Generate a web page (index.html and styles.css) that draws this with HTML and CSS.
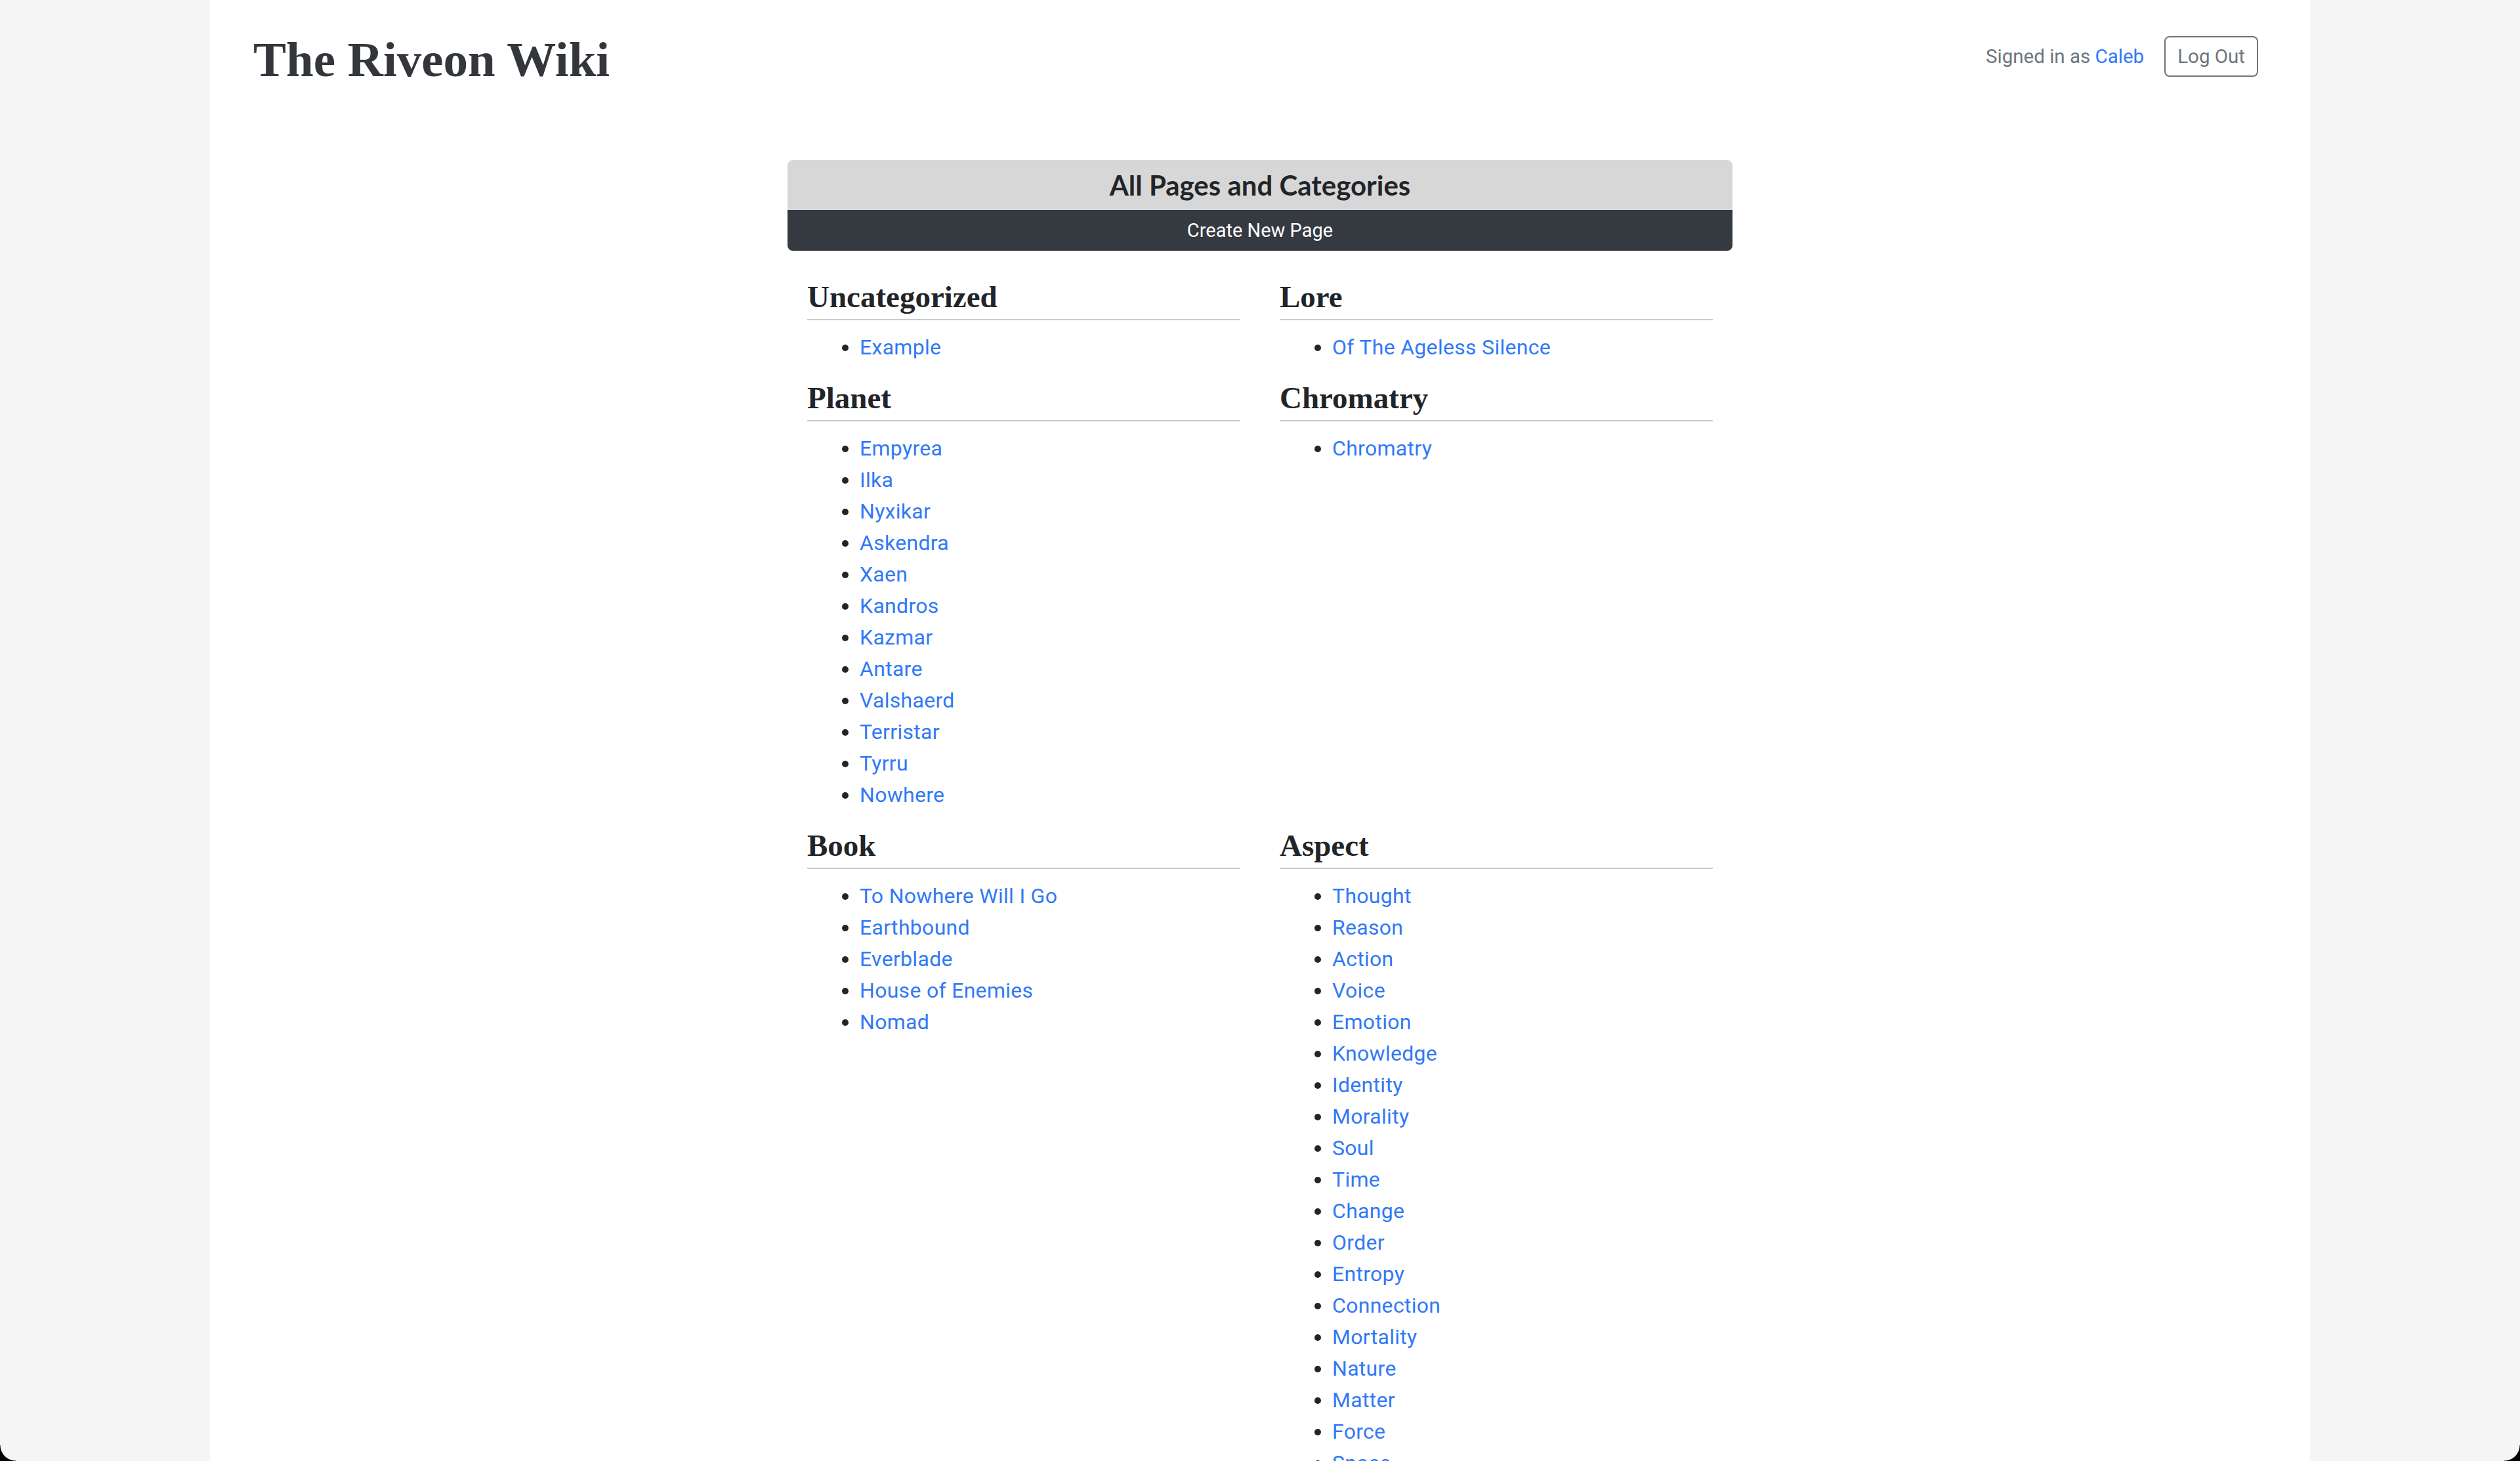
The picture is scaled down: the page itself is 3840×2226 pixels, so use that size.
FILE: index.html
```html
<!DOCTYPE html>
<html lang="en">
<head>
<meta charset="utf-8">
<title>The Riveon Wiki</title>
<link rel="stylesheet" href="styles.css">
</head>
<body>
<div class="page">
  <header class="topbar">
    <h1 class="brand">The Riveon Wiki</h1>
    <div class="account">
      <span class="signed">Signed in as <a href="#" class="link">Caleb</a></span>
      <button class="btn-logout">Log Out</button>
    </div>
  </header>

  <section class="card">
    <div class="card-head">All Pages and Categories</div>
    <a href="#" class="card-btn">Create New Page</a>
  </section>

  <div class="cats">
    <div class="cat">
      <h4 class="cat-title">Uncategorized</h4>
      <ul class="cat-list">
        <li><a href="#" class="link">Example</a></li>
      </ul>
    </div>
    <div class="cat">
      <h4 class="cat-title">Lore</h4>
      <ul class="cat-list">
        <li><a href="#" class="link">Of The Ageless Silence</a></li>
      </ul>
    </div>
    <div class="cat">
      <h4 class="cat-title">Planet</h4>
      <ul class="cat-list">
        <li><a href="#" class="link">Empyrea</a></li>
        <li><a href="#" class="link">Ilka</a></li>
        <li><a href="#" class="link">Nyxikar</a></li>
        <li><a href="#" class="link">Askendra</a></li>
        <li><a href="#" class="link">Xaen</a></li>
        <li><a href="#" class="link">Kandros</a></li>
        <li><a href="#" class="link">Kazmar</a></li>
        <li><a href="#" class="link">Antare</a></li>
        <li><a href="#" class="link">Valshaerd</a></li>
        <li><a href="#" class="link">Terristar</a></li>
        <li><a href="#" class="link">Tyrru</a></li>
        <li><a href="#" class="link">Nowhere</a></li>
      </ul>
    </div>
    <div class="cat">
      <h4 class="cat-title">Chromatry</h4>
      <ul class="cat-list">
        <li><a href="#" class="link">Chromatry</a></li>
      </ul>
    </div>
    <div class="cat">
      <h4 class="cat-title">Book</h4>
      <ul class="cat-list">
        <li><a href="#" class="link">To Nowhere Will I Go</a></li>
        <li><a href="#" class="link">Earthbound</a></li>
        <li><a href="#" class="link">Everblade</a></li>
        <li><a href="#" class="link">House of Enemies</a></li>
        <li><a href="#" class="link">Nomad</a></li>
      </ul>
    </div>
    <div class="cat">
      <h4 class="cat-title">Aspect</h4>
      <ul class="cat-list">
        <li><a href="#" class="link">Thought</a></li>
        <li><a href="#" class="link">Reason</a></li>
        <li><a href="#" class="link">Action</a></li>
        <li><a href="#" class="link">Voice</a></li>
        <li><a href="#" class="link">Emotion</a></li>
        <li><a href="#" class="link">Knowledge</a></li>
        <li><a href="#" class="link">Identity</a></li>
        <li><a href="#" class="link">Morality</a></li>
        <li><a href="#" class="link">Soul</a></li>
        <li><a href="#" class="link">Time</a></li>
        <li><a href="#" class="link">Change</a></li>
        <li><a href="#" class="link">Order</a></li>
        <li><a href="#" class="link">Entropy</a></li>
        <li><a href="#" class="link">Connection</a></li>
        <li><a href="#" class="link">Mortality</a></li>
        <li><a href="#" class="link">Nature</a></li>
        <li><a href="#" class="link">Matter</a></li>
        <li><a href="#" class="link">Force</a></li>
        <li><a href="#" class="link">Space</a></li>
      </ul>
    </div>
  </div>
</div>
<div class="win-corner win-corner-left"></div>
<div class="win-corner win-corner-right"></div>
</body>
</html>
```

FILE: styles.css
```css
html, body {
  margin: 0;
  padding: 0;
}

body {
  background: #f5f5f5;
  font-family: Roboto, "Liberation Sans", sans-serif;
  font-size: 32px;
  line-height: 48px;
  color: #212529;
}

.page {
  width: 3200px;
  min-height: 100vh;
  margin: 0 auto;
  background: #ffffff;
  box-sizing: border-box;
  padding-bottom: 40px;
}

.link {
  color: #3179f5;
  text-decoration: none;
}

/* header */
.topbar {
  height: 172px;
  display: flex;
  align-items: center;
  justify-content: space-between;
  padding: 0 79px 0 66px;
}

.brand {
  margin: 8px 0 0;
  font-family: "Liberation Serif", "DejaVu Serif", serif;
  font-weight: 700;
  font-size: 75px;
  line-height: 1;
  color: #33373b;
}

.account {
  display: flex;
  align-items: center;
  gap: 31px;
}

.signed {
  font-size: 29.5px;
  line-height: 42px;
  color: #6c757d;
}

.btn-logout {
  font-family: Roboto, "Liberation Sans", sans-serif;
  font-size: 29.5px;
  line-height: 42px;
  padding: 8px 18px;
  color: #6c757d;
  background: #ffffff;
  border: 2px solid #6c757d;
  border-radius: 8px;
}

/* card */
.card {
  width: 1440px;
  margin: 72px auto 0;
  display: flex;
  flex-direction: column;
}

.card-head {
  height: 76px;
  background: #d7d7d7;
  border-radius: 8px 8px 0 0;
  display: flex;
  align-items: center;
  justify-content: center;
  font-family: Lato, "Liberation Sans", sans-serif;
  font-weight: 700;
  font-size: 42px;
  color: #212529;
}

.card-btn {
  height: 62px;
  background: #343a40;
  border-radius: 0 0 8px 8px;
  display: flex;
  align-items: center;
  justify-content: center;
  color: #ffffff;
  font-size: 29px;
  text-decoration: none;
}

/* categories */
.cats {
  width: 1440px;
  box-sizing: border-box;
  margin: 42px auto 0;
  padding: 0 30px;
  display: grid;
  grid-template-columns: 1fr 1fr;
  column-gap: 60px;
  row-gap: 25px;
  align-items: start;
}

.cat-title {
  margin: 0;
  font-family: "Liberation Serif", "DejaVu Serif", serif;
  font-weight: 700;
  font-size: 47px;
  line-height: 56px;
  padding-bottom: 6px;
  border-bottom: 2px solid #c8c8cc;
  color: #212529;
}

.cat-list {
  margin: 17px 0 0;
  padding-left: 80px;
}

.cat-list li {
  line-height: 48px;
  letter-spacing: 0.3px;
}

/* window corners */
.win-corner {
  position: fixed;
  bottom: 0;
  width: 24px;
  height: 24px;
}

.win-corner-left {
  left: 0;
  background: radial-gradient(circle 24px at 100% 0, transparent 23px, #000 24px);
}

.win-corner-right {
  right: 0;
  background: radial-gradient(circle 24px at 0 0, transparent 23px, #000 24px);
}
```
